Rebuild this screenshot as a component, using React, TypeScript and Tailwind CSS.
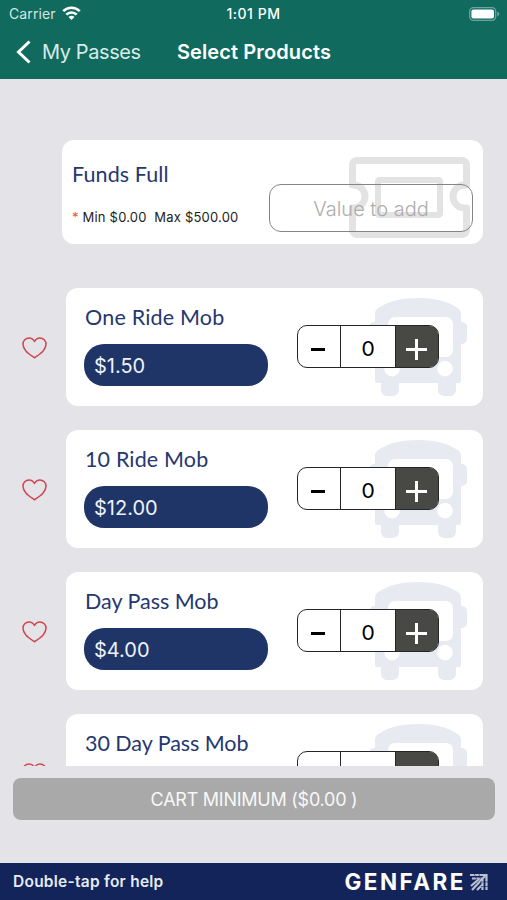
type Product = {
  name: string;
  price?: string;
  tracking: string;
};

const products: Product[] = [
  { name: 'One Ride Mob', price: '$1.50', tracking: 'tracking-[0.2px]' },
  { name: '10 Ride Mob', price: '$12.00', tracking: 'tracking-[0.15px]' },
  { name: 'Day Pass Mob', price: '$4.00', tracking: 'tracking-[-0.03px]' },
  { name: '30 Day Pass Mob', tracking: 'tracking-[-0.05px]' },
];

function StatusBar() {
  return (
    <div className="grid h-[27px] grid-cols-3 items-center pl-[9px] pr-[7px] text-[14px]">
      <div className="flex items-center gap-[6px]">
        <span className="tracking-[0.1px] text-[#d3e6e3]">Carrier</span>
        <svg width="19" height="15" viewBox="0 0 19 15" fill="none" stroke="white" strokeWidth="2.6">
          <path d="M1.200 5.200a11.800 11.800 0 0 1 16.600 0" />
          <path d="M4.300 8.700a7.400 7.400 0 0 1 10.400 0" />
          <path d="M9.500 14 6.500 11a4.200 4.200 0 0 1 6 0z" fill="white" stroke="none" />
        </svg>
      </div>
      <span className="-ml-[2px] text-center font-medium tracking-[0.5px]">1:01 PM</span>
      <svg className="justify-self-end" width="31" height="14" viewBox="0 0 31 14">
        <rect x="0.7" y="0.7" width="26" height="12.6" rx="3.8" fill="none" stroke="#6da59e" strokeWidth="1.3" />
        <rect x="2.4" y="2.4" width="22.6" height="9.2" rx="2" fill="white" />
        <path d="M28.300 4.600c2.600.8 2.600 4 0 4.800z" fill="#6da59e" />
      </svg>
    </div>
  );
}

function HeartIcon() {
  return (
    <svg width="25" height="22" viewBox="0 0 25 22" fill="none" stroke="#cf4650" strokeWidth="1.5" strokeLinejoin="round">
      <path d="M12.500 4.500C11.300 2.200 9.400 1 7.100 1 3.600 1 1 3.700 1 7.300c0 5.700 5.500 9.200 11.500 13.500 6-4.300 11.500-7.800 11.500-13.500C24 3.700 21.400 1 17.900 1c-2.300 0-4.200 1.200-5.400 3.500z" />
    </svg>
  );
}

function BusIcon() {
  return (
    <svg className="absolute left-[303px] top-[9px]" width="100" height="101" viewBox="0 0 100 101" fill="#e7ebf1">
      <path
        fillRule="evenodd"
        d="M6 84V18c0-4 1-6 5-8C20 4 33 1 49 1s29 3 38 9c4 2 5 4 5 8v7h1a5 5 0 0 1 5 5v12a5 5 0 0 1-5 5h-1v37a2 2 0 0 1-2 2h-3v6c0 5-3 7-6 7h-5c-4 0-7-2-7-7v-6H30v6c0 5-3 7-7 7h-5c-3 0-6-2-6-7v-6H8a2 2 0 0 1-2-2V47H5a5 5 0 0 1-5-5V30a5 5 0 0 1 5-5h1zM26 20a7 7 0 0 0-7 7v26a7 7 0 0 0 7 7h51a7 7 0 0 0 7-7V27a7 7 0 0 0-7-7zM23 64a7.700 7.700 0 1 0 .1 0zM76 64a7.700 7.700 0 1 0 .1 0z"
      />
    </svg>
  );
}

function TicketIcon() {
  return (
    <svg className="absolute left-[286px] top-[16px]" width="123" height="83" viewBox="0 0 123 83" fill="none" stroke="#e3e3e3">
      <path
        strokeWidth="7"
        strokeLinejoin="round"
        d="M9 4.500h105a4.500 4.500 0 0 1 4.500 4.500v20h-2a11.500 11.500 0 0 0 0 23h2V74a4.500 4.500 0 0 1-4.500 4.500H9A4.500 4.500 0 0 1 4.500 74V52h1a11.500 11.500 0 0 0 0-23h-1V9A4.500 4.500 0 0 1 9 4.500z"
      />
      <rect x="30" y="24" width="62" height="35" rx="1.5" strokeWidth="6" />
    </svg>
  );
}

function Stepper({ empty }: { empty: boolean }) {
  return (
    <div className="relative ml-[29px] mt-[37px] flex h-[43px] w-[142px] rounded-[10px] border-[1.5px] border-[#252525] bg-white">
      <button className="flex w-[43px] items-center justify-center border-r border-[#252525]">
        <span className="mr-[2px] mt-[6px] h-[3px] w-[14px] bg-black" />
      </button>
      <span className="flex flex-1 items-center justify-center pt-[2px] font-[Lato] text-[21px] text-black">{empty ? '' : '0'}</span>
      <button className="flex w-[43px] items-center justify-center rounded-r-[8px] border-l border-[#252525] bg-[#484845]">
        {!empty && (
          <svg className="mr-[2px] mt-[6px]" width="21" height="21" viewBox="0 0 21 21" stroke="white" strokeWidth="3">
            <path d="M10.500 0v21M0 10.500h21" />
          </svg>
        )}
      </button>
    </div>
  );
}

function ProductRow({ name, price, tracking }: Product) {
  return (
    <div className="flex h-[118px] shrink-0 items-center">
      <div className="flex w-[66px] pl-[22px] pt-[2px]">
        <HeartIcon />
      </div>
      <div className="relative flex h-full w-[417px] rounded-xl bg-white">
        <BusIcon />
        <div className="relative ml-[18px] w-[184px]">
          <h2 className={`ml-[1px] mt-[15px] whitespace-nowrap font-[Lato] text-[21.5px] leading-[29px] text-[#26376f] ${tracking}`}>
            {name}
          </h2>
          <div className="mt-[12px] flex h-[42px] items-center rounded-[20px] bg-[#203567] pl-[10px] pt-[2px] text-[20px] text-[#eef1fa]">
            {price}
          </div>
        </div>
        <Stepper empty={!price} />
      </div>
    </div>
  );
}

function FundsCard() {
  return (
    <div className="relative ml-[62px] flex h-[104px] w-[421px] shrink-0 rounded-xl bg-white">
      <TicketIcon />
      <div className="w-[207px] pl-[10px]">
        <h2 className="mt-[20px] font-[Lato] text-[21.5px] leading-[29px] tracking-[0.1px] text-[#26376f]">Funds Full</h2>
        <p className="mt-[17px] whitespace-pre text-[13px] leading-[22px] tracking-[0.2px] text-[#1d1d1d]">
          <span className="text-[#f0503c]">*</span> Min $0.00{'  '}Max $500.00
        </p>
      </div>
      <div className="relative mt-[44px] flex h-[48px] w-[204px] items-center justify-center rounded-[12px] border border-[#858585] pt-[1px] text-[20px] font-light text-[#adadad]">
        Value to add
      </div>
    </div>
  );
}

export default function App() {
  return (
    <div className="flex h-[900px] w-[507px] flex-col overflow-hidden bg-[#e4e3e8] font-[Inter,sans-serif]">
      <header className="h-[79px] shrink-0 bg-[#106a5e] text-white">
        <StatusBar />
        <div className="flex h-[50px] items-center pl-[16px]">
          <svg width="15" height="24" viewBox="0 0 15 24" fill="none" stroke="white" strokeWidth="3">
            <path d="M13.500 1.500 2.500 12l11 10.500" />
          </svg>
          <span className="ml-[11px] w-[135px] text-[20px] tracking-[-0.4px] text-[#d9ebe8]">My Passes</span>
          <h1 className="text-[20px] font-semibold tracking-[0.1px]">Select Products</h1>
        </div>
      </header>

      <main className="flex h-[687px] shrink-0 flex-col overflow-hidden pt-[61px]">
        <FundsCard />
        <div className="mt-[44px] flex flex-col gap-6">
          {products.map((product) => (
            <ProductRow key={product.name} {...product} />
          ))}
        </div>
      </main>

      <button className="mx-[13px] mt-[12px] h-[42px] w-[482px] shrink-0 rounded-lg bg-[#a9a9a9] pt-[1px] text-[18px] tracking-[-0.25px] text-[#f8f8f8]">
        CART MINIMUM ($0.00 )
      </button>

      <footer className="mt-auto flex h-[37px] items-center justify-between bg-[#122459] pl-[13px] pr-[19px] text-white">
        <span className="pt-[1px] text-[15.5px] font-semibold tracking-[0.25px] text-[#e8ebf5]">Double-tap for help</span>
        <div className="flex items-center gap-[4px]">
          <span className="text-[22.5px] font-bold tracking-[2.5px]">GENFARE</span>
          <svg width="18" height="18" viewBox="0 0 18 18" fill="none" stroke="#b9c0d4" strokeWidth="2.2">
            <path d="M0 2h17M2 5.500h11M16.500 1v16M12.500 6v11M1 13 9 6M2 17 15 3M7 17l6-6" />
            <path d="M4 0l3 7M8.500 0l2 6M10 9h8M11 13.500h7" stroke="#122459" strokeWidth="0.6" />
          </svg>
        </div>
      </footer>
    </div>
  );
}
